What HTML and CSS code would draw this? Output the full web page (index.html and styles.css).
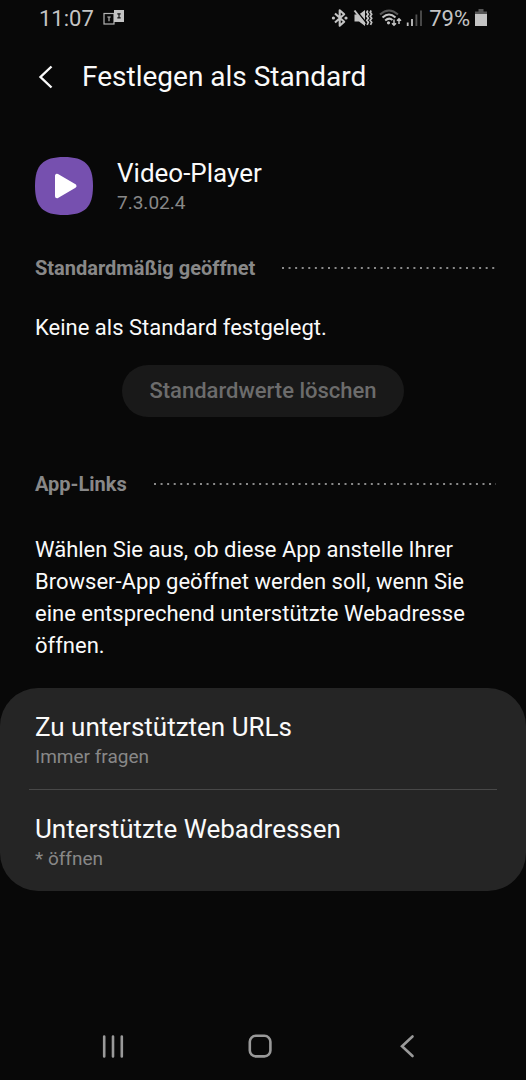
FILE: index.html
```html
<!DOCTYPE html>
<html lang="de">
<head>
<meta charset="utf-8">
<meta name="viewport" content="width=device-width, initial-scale=1">
<title>Festlegen als Standard</title>
<link rel="stylesheet" href="styles.css">
</head>
<body>
<div class="screen">
  <div class="status">
    <span class="clock">11:07</span>
    <svg class="notice" width="22" height="16" viewBox="0 0 22 16" aria-hidden="true">
      <rect x="1" y="3.5" width="10" height="10.5" fill="none" stroke="#b4b4b4" stroke-width="1.2"/>
      <path d="M4.3 7h3.4M6 7v4.3" stroke="#b4b4b4" stroke-width="1.2"/>
      <rect x="11" y="0" width="10" height="12" fill="#c4c4c4"/>
      <path d="M14.3 3.8h3.4M14.3 7.8h3.4M16 3.8v4" stroke="#151515" stroke-width="1.2"/>
    </svg>
    <div class="signals">
      <svg width="18" height="20" viewBox="0 0 18 20" aria-hidden="true">
        <path d="M4 5.5l9.2 8.2-4.5 4V2.3l4.5 4L4 14.5" fill="none" stroke="#c4c4c4" stroke-width="2.1" stroke-linejoin="round"/>
        <circle cx="2.4" cy="10" r="1.6" fill="#c4c4c4"/><circle cx="15" cy="10" r="1.6" fill="#c4c4c4"/>
      </svg>
      <svg width="20" height="20" viewBox="0 0 20 20" aria-hidden="true">
        <path d="M1.500 6.500h4.500L12 2v16L6 13.500H1.500z" fill="#c4c4c4"/>
        <path d="M2.500 1.500L13 14.500" stroke="#080808" stroke-width="1.500"/>
        <path d="M1.500 2.500L12 16" stroke="#c4c4c4" stroke-width="2"/>
        <path d="M14.800 2.500l-1 1.800 1.500 2-1.500 2 1.500 2-1.500 2 1.500 2-1.200 2.500M18.200 2.500l-1 1.800 1.500 2-1.500 2 1.500 2-1.500 2 1.500 2-1.200 2.500" fill="none" stroke="#c4c4c4" stroke-width="1.700"/>
      </svg>
      <svg class="wifi" width="23" height="20" viewBox="0 0 23 20" aria-hidden="true">
        <path d="M1 6.500Q10 -1.500 19 6.500" fill="none" stroke="#555" stroke-width="2"/>
        <path d="M3.500 9.500Q10 3.500 16.500 9.500M6.200 12.500Q10 9 13.500 12" fill="none" stroke="#c4c4c4" stroke-width="2"/>
        <circle cx="9.500" cy="14.800" r="1.600" fill="#c4c4c4"/>
        <path d="M15 11.500v6M13 15.200l2 2 2-2M20 16v-5M18 12.800l2-2 2 2" fill="none" stroke="#c4c4c4" stroke-width="1.500"/>
      </svg>
      <svg width="18" height="20" viewBox="0 0 18 20" aria-hidden="true">
        <path d="M1.700 14.500V18M6 11v7" stroke="#c4c4c4" stroke-width="1.800"/>
        <path d="M10.400 6.500V18M15 2.500V18" stroke="#505050" stroke-width="1.800"/>
      </svg>
      <span class="percent">79%</span>
      <svg width="14" height="20" viewBox="0 0 14 20" aria-hidden="true">
        <path d="M1 6V3.500h3.500V1h5v2.500H13V6z" fill="#555"/>
        <path d="M1 6h12v12H1z" fill="#c4c4c4"/>
      </svg>
    </div>
  </div>

  <header class="bar">
    <button class="back" type="button" aria-label="Zurück">
      <svg width="16" height="24" viewBox="0 0 16 24" aria-hidden="true"><path d="M13.500 1.500L2.500 12l11 10.500" fill="none" stroke="#fafafa" stroke-width="2.400"/></svg>
    </button>
    <h1 class="title">Festlegen als Standard</h1>
  </header>

  <main class="content">
    <div class="app">
      <svg width="58" height="58" viewBox="0 0 58 58" aria-hidden="true">
        <path d="M29 0C50 0 58 8 58 29S50 58 29 58 0 50 0 29 8 0 29 0z" fill="#7650af"/>
        <path d="M22 18.800v20.400L39.500 29z" fill="#fff" stroke="#fff" stroke-width="4" stroke-linejoin="round"/>
      </svg>
      <div>
        <div class="name">Video-Player</div>
        <div class="sub">7.3.02.4</div>
      </div>
    </div>

    <section class="defaults">
      <div class="heading">
        <h2 class="label">Standardmäßig geöffnet</h2>
        <svg class="dots" height="2" aria-hidden="true"><line x1="0" y1="1" x2="100%" y2="1" stroke="#8a8a8a" stroke-width="2" stroke-dasharray="2 4.570"/></svg>
      </div>
      <p class="text">Keine als Standard festgelegt.</p>
      <button class="clear" type="button" disabled>Standardwerte löschen</button>
    </section>

    <section class="links">
      <div class="heading">
        <h2 class="label">App-Links</h2>
        <svg class="dots" height="2" aria-hidden="true"><line x1="0" y1="1" x2="100%" y2="1" stroke="#8a8a8a" stroke-width="2" stroke-dasharray="2 4.570"/></svg>
      </div>
      <p class="text">Wählen Sie aus, ob diese App anstelle Ihrer Browser-App geöffnet werden soll, wenn Sie eine entsprechend unterstützte Webadresse öffnen.</p>
    </section>
  </main>

  <div class="card">
    <button class="row" type="button"><span class="name">Zu unterstützten URLs</span><span class="sub">Immer fragen</span></button>
    <hr class="divider">
    <button class="row" type="button"><span class="name">Unterstützte Webadressen</span><span class="sub">* öffnen</span></button>
  </div>

  <nav class="nav" aria-label="Navigation">
    <button type="button" aria-label="Letzte Apps"><svg width="26" height="26" viewBox="0 0 26 26" aria-hidden="true"><path d="M4.200 3.500v20M13 3.500v20M21.800 3.500v20" stroke="#999" stroke-width="2.600" stroke-linecap="round"/></svg></button>
    <button type="button" aria-label="Startseite"><svg width="26" height="26" viewBox="0 0 26 26" aria-hidden="true"><rect x="2.800" y="2.800" width="20.600" height="20.600" rx="6" fill="none" stroke="#999" stroke-width="2.600"/></svg></button>
    <button type="button" aria-label="Zurück"><svg width="26" height="26" viewBox="0 0 26 26" aria-hidden="true"><path d="M18.500 3.500L8 13.200l10.500 9.800" fill="none" stroke="#999" stroke-width="2.600" stroke-linecap="round"/></svg></button>
  </nav>
</div>
</body>
</html>
```
FILE: styles.css
```css
* { box-sizing: border-box; }
body {
  margin: 0;
  background: #080808;
  color: #fafafa;
  font-family: Roboto, "Noto Sans", sans-serif;
}
button {
  margin: 0;
  padding: 0;
  border: 0;
  background: none;
  color: inherit;
  font: inherit;
}
svg { display: block; flex: none; }
h1, h2, p { margin: 0; }
.screen {
  display: flex;
  flex-direction: column;
  min-height: 100vh;
}
.status {
  display: flex;
  align-items: center;
  height: 36px;
  padding: 0 38px 0 39px;
  color: #c4c4c4;
  font-size: 22px;
}
.notice { margin-left: 9px; }
.signals {
  display: flex;
  align-items: center;
  gap: 4px;
  margin-left: auto;
}
.wifi { margin-left: 2px; }
.percent { margin-left: 1px; }
.bar {
  display: flex;
  align-items: center;
  gap: 28px;
  height: 82px;
  padding: 0 38px;
}
.title {
  font-size: 28px;
  font-weight: 400;
  line-height: 36px;
}
.content { padding: 38px 35px 0; }
.app {
  display: flex;
  align-items: center;
  gap: 24px;
}
.name {
  display: block;
  font-size: 26px;
  line-height: 34px;
}
.sub {
  display: block;
  color: #888;
  font-size: 19px;
  line-height: 26px;
}
.heading {
  display: flex;
  align-items: center;
  gap: 27px;
  margin-right: -5px;
}
.label {
  color: #888;
  font-size: 20px;
  font-weight: 700;
  line-height: 28px;
}
.dots {
  flex: 1;
  min-width: 0;
}
.text {
  font-size: 22px;
  line-height: 32px;
}
.defaults { margin-top: 38px; }
.defaults .text { margin-top: 30px; }
.clear {
  display: block;
  margin: 21px auto 0;
  padding: 0 27px;
  border-radius: 26px;
  background: #191919;
  color: #6c6c6c;
  font-size: 22px;
  font-weight: 500;
  line-height: 52px;
}
.links { margin-top: 53px; }
.links .text { margin-top: 36px; }
.card {
  margin-top: 26px;
  border-radius: 38px;
  background: #252525;
}
.row {
  display: block;
  width: 100%;
  padding: 22px 35px 19px;
  text-align: left;
}
.divider {
  width: auto;
  height: 1px;
  margin: 0 29px;
  border: 0;
  background: #484848;
}
.nav {
  display: flex;
  justify-content: center;
  gap: 121px;
  margin-top: auto;
  padding: 0 6px 21px 0;
}
```
